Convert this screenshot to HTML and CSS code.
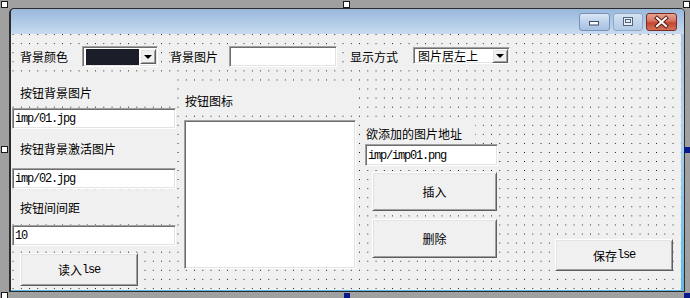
FILE: index.html
```html
<!DOCTYPE html>
<html>
<head>
<meta charset="utf-8">
<link rel="stylesheet" href="styles.css">
</head>
<body>
<div class="window">
  <div class="titlebar">
    <div class="tbtn tmin">
      <svg width="31" height="18" viewBox="0 0 31 18"><rect x="10.5" y="8.5" width="9" height="3.5" fill="#fbfdff" stroke="#3d4d66"/></svg>
    </div>
    <div class="tbtn tmax">
      <svg width="30" height="18" viewBox="0 0 30 18"><rect x="10.5" y="4.5" width="9" height="8" fill="#e6eef8" stroke="#55657d"/><rect x="12.5" y="6.5" width="5" height="3" fill="none" stroke="#55657d"/></svg>
    </div>
    <div class="tbtn tclose">
      <svg width="31" height="18" viewBox="0 0 31 18"><path d="M11 5 L20 13 M20 5 L11 13" stroke="#5b1d14" stroke-width="4" stroke-linecap="square"/><path d="M11 5 L20 13 M20 5 L11 13" stroke="#ffffff" stroke-width="2" stroke-linecap="square"/></svg>
    </div>
  </div>
  <div class="client">
    <div class="toprow">
      <div class="tlabel w62">背景颜色</div>
      <div class="sunken colorcombo">
        <div class="swatch"></div>
        <div class="raised drop"><span class="arrow"></span></div>
      </div>
      <div class="tlabel w59 ml12">背景图片</div>
      <div class="sunken textbox w108"></div>
      <div class="tlabel w63 ml13">显示方式</div>
      <div class="sunken combo2">
        <span class="combotext">图片居左上</span>
        <div class="raised drop2"><span class="arrow"></span></div>
      </div>
    </div>
    <div class="lower">
      <div class="col col-left">
        <div class="lbl l1">按钮背景图片</div>
        <div class="sunken tb tb1"><span class="mono">imp/01.jpg</span></div>
        <div class="lbl l2">按钮背景激活图片</div>
        <div class="sunken tb tb2"><span class="mono">imp/02.jpg</span></div>
        <div class="lbl l3">按钮间间距</div>
        <div class="sunken tb tb3"><span class="mono">10</span></div>
        <div class="raised btn btn-read">读入<span class="asc">lse</span></div>
      </div>
      <div class="col col-mid">
        <div class="lbl lm">按钮图标</div>
        <div class="sunken listbox"></div>
      </div>
      <div class="col col-right">
        <div class="lbl lr">欲添加的图片地址</div>
        <div class="sunken tb tbr"><span class="mono">imp/imp01.png</span></div>
        <div class="raised btn btn-ins">插入</div>
        <div class="raised btn btn-del">删除</div>
      </div>
      <div class="col col-far">
        <div class="raised btn btn-save">保存<span class="asc">lse</span></div>
      </div>
    </div>
  </div>
</div>
<div class="handle h-tl"></div>
<div class="handle h-tm"></div>
<div class="handle h-tr"></div>
<div class="handle h-lm"></div>
<div class="handle h-bl"></div>
<div class="handle blue h-bm"></div>
<div class="handle blue h-rm"></div>
<div class="handle blue h-br"></div>
</body>
</html>
```

FILE: styles.css
```css
html, body {
  margin: 0;
  padding: 0;
}
body {
  width: 690px;
  height: 298px;
  overflow: hidden;
  position: relative;
  background: #a0a0a0;
  font-family: "Noto Sans CJK SC", "Noto Sans", sans-serif;
  font-size: 12px;
  color: #000;
}
.window {
  box-sizing: border-box;
  margin: 8px 0 0 9px;
  width: 676px;
  height: 284px;
  border-top: 1px solid #2b2b2b;
  border-left: 2px solid #2b2b2b;
  border-right: 1px solid #2b2b2b;
  border-bottom: 1px solid #2b2b2b;
  border-radius: 5px 5px 0 0;
  padding-right: 3px;
  padding-bottom: 1px;
  background: linear-gradient(#a5c1e0, #b5d0ec 40%, #5cb8e6);
  display: flex;
  flex-direction: column;
}
.titlebar {
  height: 25px;
  flex: none;
  margin-right: -3px;
  border-radius: 4px 4px 0 0;
  background: linear-gradient(#9ab8db, #b2cbe8 55%, #c9dbef);
  display: flex;
  justify-content: flex-end;
  align-items: flex-start;
  padding-right: 7px;
  gap: 3px;
}
.tbtn {
  margin-top: 4px;
  height: 18px;
  box-sizing: border-box;
  border-radius: 3px;
  display: flex;
}
.tbtn svg { display: block; margin: -1px; }
.tmin {
  width: 31px;
  border: 1px solid #7891b6;
  background: linear-gradient(#dbe7f5, #bcd1ea 50%, #a6c1e3);
}
.tmax {
  width: 30px;
  border: 1px solid #90a8c8;
  background: linear-gradient(#d6e3f2, #c2d5ec 50%, #b4cae6);
}
.tclose {
  width: 31px;
  border: 1px solid #7c2b22;
  background: linear-gradient(#e6a593, #d5725e 45%, #c4432f 55%, #d2735c);
}
.client {
  flex: 1;
  background-color: #f0f0f0;
  background-image: conic-gradient(from 270deg at 1.1px 1.1px, #000 90deg, transparent 0);
  background-size: 8.26px 9.07px;
  background-position: 1.6px 0.2px;
  display: flex;
  flex-direction: column;
}
.toprow {
  margin-top: 12px;
  height: 21px;
  display: flex;
  align-items: center;
  padding-left: 9px;
}
.tlabel {
  background: #f0f0f0;
  height: 16px;
  line-height: 16px;
  white-space: nowrap;
}
.tlabel.w62 { width: 62px; }
.tlabel.w59 { width: 59px; }
.tlabel.w63 { width: 63px; }
.ml12 { margin-left: 12px; }
.ml13 { margin-left: 13px; }
.sunken {
  box-sizing: border-box;
  background: #fff;
  border: 1px solid;
  border-color: #a0a0a0 #ffffff #ffffff #a0a0a0;
  box-shadow: inset 1px 1px 0 #6e6e6e, inset -1px -1px 0 #e3e3e3;
}
.raised {
  box-sizing: border-box;
  background: #f0f0f0;
  border: 1px solid;
  border-color: #ffffff #5f5f5f #5f5f5f #ffffff;
  box-shadow: inset 1px 1px 0 #e3e3e3, inset -1px -1px 0 #a0a0a0;
}
.colorcombo {
  width: 76px;
  height: 21px;
  display: flex;
  align-items: center;
  padding: 2px 1px 2px 3px;
}
.swatch {
  width: 53px;
  height: 16px;
  background: #1b1e28;
}
.drop {
  margin-left: auto;
  width: 16px;
  height: 15px;
  display: flex;
  align-items: center;
  justify-content: center;
}
.arrow {
  width: 0;
  height: 0;
  border-left: 4px solid transparent;
  border-right: 4px solid transparent;
  border-top: 4px solid #000;
  margin-top: 1px;
}
.textbox.w108 { width: 108px; height: 21px; }
.combo2 {
  width: 97px;
  height: 17px;
  align-self: flex-start;
  margin-top: 1px;
  display: flex;
  align-items: center;
  padding: 1px 1px 1px 4px;
}
.combotext {
  font-size: 12px;
  line-height: 14px;
  white-space: nowrap;
}
.drop2 {
  margin-left: auto;
  width: 16px;
  height: 14px;
  display: flex;
  align-items: center;
  justify-content: center;
}
.lower {
  margin-top: 12px;
  display: flex;
  align-items: flex-start;
}
.col {
  display: flex;
  flex-direction: column;
  align-items: flex-start;
}
.lbl {
  background: #f0f0f0;
  display: flex;
  align-items: center;
  white-space: nowrap;
  box-sizing: border-box;
}
.col-left { width: 164px; margin-left: 1px; }
.col-left .lbl { width: 164px; padding-left: 8px; }
.l1 { height: 27px; }
.l2 { height: 31px; margin-top: 4px; }
.l3 { height: 28px; margin-top: 4px; }
.tb {
  height: 21px;
  display: flex;
  align-items: center;
  padding-left: 2px;
  padding-top: 1px;
}
.col-left .tb { width: 164px; }
.tb1 { margin-top: 2px; }
.tb2 { margin-top: 4px; }
.tb3 { margin-top: 4px; }
.mono {
  font-family: "Liberation Mono", monospace;
  font-size: 12px;
  letter-spacing: -1.2px;
  white-space: nowrap;
}
.asc {
  font-family: "Liberation Mono", monospace;
  font-size: 12px;
  letter-spacing: -1.2px;
}
.btn {
  display: flex;
  align-items: center;
  justify-content: center;
  white-space: nowrap;
}
.btn-read {
  margin-top: 7px;
  margin-left: 8px;
  width: 118px;
  height: 33px;
}
.col-mid { width: 176px; margin-left: 5px; }
.lm { height: 26px; margin-top: 8px; padding-left: 4px; width: 176px; }
.listbox {
  margin-top: 7px;
  margin-left: 3px;
  width: 172px;
  height: 149px;
}
.col-right { width: 133px; margin-left: 8px; }
.lr { height: 22px; margin-top: 43px; padding-left: 1px; width: 110px; }
.tbr { width: 133px; height: 22px; }
.btn-ins {
  margin-top: 6px;
  margin-left: 7px;
  width: 125px;
  height: 39px;
}
.btn-del {
  margin-top: 8px;
  margin-left: 7px;
  width: 125px;
  height: 39px;
}
.col-far { margin-left: 57px; margin-top: 160px; }
.btn-save { width: 118px; height: 32px; }
.handle {
  position: absolute;
  box-sizing: border-box;
  width: 7px;
  height: 7px;
  background: #fff;
  border: 1px solid #1a1a1a;
}
.handle.blue {
  width: 6px;
  height: 6px;
  background: #0b1a8a;
  border-color: #0b1a8a;
}
.h-tl { left: 1px; top: 1px; }
.h-tm { left: 343px; top: 1px; }
.h-tr { left: 683px; top: 1px; }
.h-lm { left: 1px; top: 146px; }
.h-bl { left: 1px; top: 292px; }
.h-bm { left: 344px; top: 293px; }
.h-rm { left: 684px; top: 147px; }
.h-br { left: 684px; top: 293px; }
```
